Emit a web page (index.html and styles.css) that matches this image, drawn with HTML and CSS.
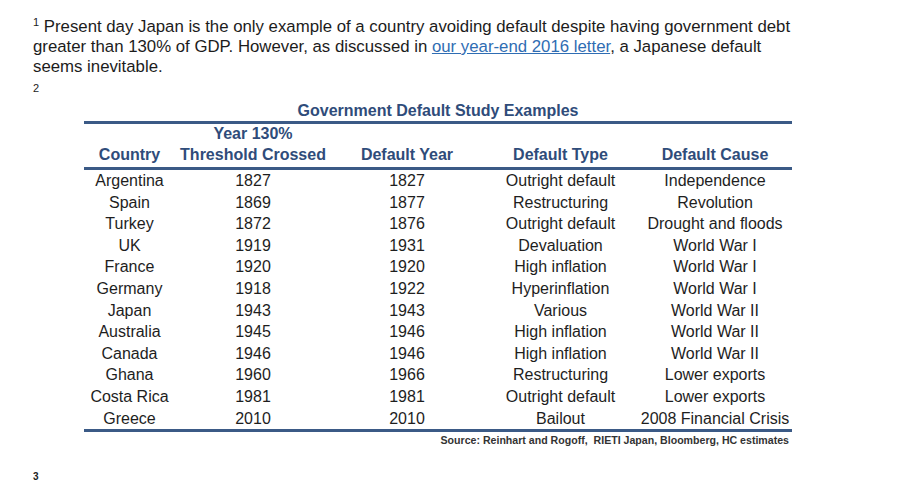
FILE: index.html
```html
<!DOCTYPE html>
<html lang="en">
<head>
<meta charset="utf-8">
<title>Government Default Study Examples</title>
<link rel="stylesheet" href="styles.css">
</head>
<body>
<p class="note"><sup class="fn">1</sup> Present day Japan is the only example of a country avoiding default despite having government debt greater than 130% of GDP. However, as discussed in <a class="link" href="#">our year-end 2016 letter</a>, a Japanese default seems inevitable.</p>
<div class="pnum">2</div>
<div class="study">
  <div class="title">Government Default Study Examples</div>
  <table class="grid">
    <colgroup>
      <col class="c1"><col class="c2"><col class="c3"><col class="c4"><col class="c5">
    </colgroup>
    <thead>
      <tr class="h1"><th></th><th>Year 130%</th><th></th><th></th><th></th></tr>
      <tr class="h2"><th>Country</th><th>Threshold Crossed</th><th>Default Year</th><th>Default Type</th><th>Default Cause</th></tr>
    </thead>
    <tbody>
      <tr><td>Argentina</td><td>1827</td><td>1827</td><td>Outright default</td><td>Independence</td></tr>
      <tr><td>Spain</td><td>1869</td><td>1877</td><td>Restructuring</td><td>Revolution</td></tr>
      <tr><td>Turkey</td><td>1872</td><td>1876</td><td>Outright default</td><td>Drought and floods</td></tr>
      <tr><td>UK</td><td>1919</td><td>1931</td><td>Devaluation</td><td>World War I</td></tr>
      <tr><td>France</td><td>1920</td><td>1920</td><td>High inflation</td><td>World War I</td></tr>
      <tr><td>Germany</td><td>1918</td><td>1922</td><td>Hyperinflation</td><td>World War I</td></tr>
      <tr><td>Japan</td><td>1943</td><td>1943</td><td>Various</td><td>World War II</td></tr>
      <tr><td>Australia</td><td>1945</td><td>1946</td><td>High inflation</td><td>World War II</td></tr>
      <tr><td>Canada</td><td>1946</td><td>1946</td><td>High inflation</td><td>World War II</td></tr>
      <tr><td>Ghana</td><td>1960</td><td>1966</td><td>Restructuring</td><td>Lower exports</td></tr>
      <tr><td>Costa Rica</td><td>1981</td><td>1981</td><td>Outright default</td><td>Lower exports</td></tr>
      <tr><td>Greece</td><td>2010</td><td>2010</td><td>Bailout</td><td>2008 Financial Crisis</td></tr>
    </tbody>
  </table>
  <div class="source">Source: Reinhart and Rogoff,&nbsp; RIETI Japan, Bloomberg, HC estimates</div>
</div>
<div class="pnum3">3</div>
</body>
</html>
```
FILE: styles.css
```css
html, body {
  margin: 0;
  padding: 0;
  background: #ffffff;
}
body {
  font-family: "Liberation Sans", Arial, sans-serif;
  color: #1c1c1c;
}
.note {
  margin: 17px 0 0 33px;
  width: 780px;
  font-size: 16.8px;
  line-height: 20px;
}
.fn {
  font-size: 11px;
  line-height: 0;
  vertical-align: 6px;
}
.link {
  color: #2f6db3;
  text-decoration: underline;
}
.pnum {
  margin: 4px 0 0 33px;
  font-size: 11px;
  line-height: 14px;
}
.study {
  width: 708px;
  margin: 5px 0 0 84px;
}
.title {
  text-align: center;
  font-weight: bold;
  font-size: 16px;
  line-height: 21px;
  color: #2f4c7a;
  border-bottom: 3px solid #3b5a86;
}
.grid {
  width: 100%;
  border-collapse: collapse;
  table-layout: fixed;
  font-size: 16px;
  color: #1e1e1e;
}
.c1 { width: 91px; }
.c2 { width: 156px; }
.c3 { width: 152px; }
.c4 { width: 155px; }
.c5 { width: 154px; }
.grid th {
  padding: 0;
  font-weight: bold;
  color: #2f4c7a;
  text-align: center;
  white-space: nowrap;
}
.h1 th {
  height: 19px;
  line-height: 19px;
}
.h2 th {
  height: 24px;
  line-height: 24px;
}
.h2 {
  border-bottom: 3px solid #3b5a86;
}
.grid tbody {
  border-bottom: 3px solid #3b5a86;
}
.grid td {
  padding: 0;
  height: 21.6px;
  line-height: 21.6px;
  text-align: center;
  white-space: nowrap;
}
.source {
  text-align: right;
  font-size: 10.6px;
  font-weight: bold;
  line-height: 17px;
  color: #333333;
  padding-right: 3px;
}
.pnum3 {
  margin: 22px 0 0 33px;
  font-size: 10px;
  font-weight: bold;
  line-height: 12px;
}
```
